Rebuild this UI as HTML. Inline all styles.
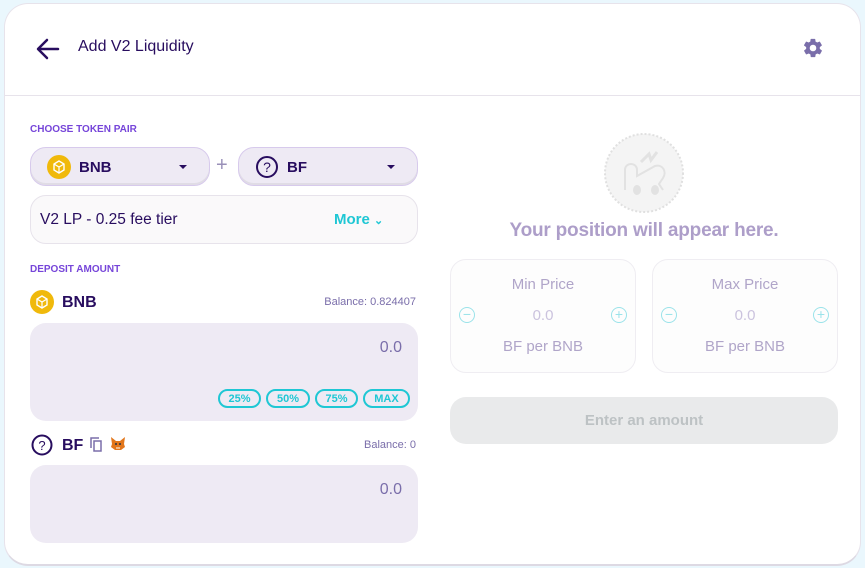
<!DOCTYPE html>
<html><head><meta charset="utf-8"><style>
*{box-sizing:border-box;margin:0;padding:0}
body{width:865px;height:568px;background:#eaf7fd;font-family:"Liberation Sans",sans-serif;position:relative;overflow:hidden;color:#280d5f}
.card{position:absolute;left:4px;top:3px;width:857px;height:563px;background:#fff;border:1px solid #e7e3eb;border-bottom:2px solid #ddd9e3;border-radius:24px;overflow:hidden}
.hdr{position:absolute;left:0;top:0;width:100%;height:92px;border-bottom:1px solid #e7e3eb}
.abs{position:absolute}
.lbl{font-size:10px;font-weight:bold;color:#7645d9}
.sel{position:absolute;top:143px;height:39px;background:#eeeaf4;border:1px solid #d7caec;border-radius:16px;box-shadow:inset 0 -2px 0 rgba(0,0,0,.06)}
.sel b{position:absolute;left:48px;top:11px;font-size:15px}
.caret{position:absolute;right:22px;top:17px;width:0;height:0;border-left:4px solid transparent;border-right:4px solid transparent;border-top:4px solid #280d5f}
.inp{position:absolute;left:25px;width:388px;background:#eeeaf4;border-radius:16px}
.pct{position:absolute;top:66px;height:19px;border:2px solid #1fc7d4;border-radius:10px;color:#1fc7d4;font-size:11px;font-weight:bold;text-align:center;line-height:16px}
.pbox{position:absolute;top:255px;width:186px;height:114px;border:1px solid #efedf2;border-radius:16px;background:#fdfdfd;text-align:center;color:#b0a5c9}
.circ{position:absolute;top:47px;width:16px;height:16px;border:1.5px solid #9be3ea;border-radius:50%;color:#9be3ea;font-size:14px;line-height:12px;text-align:center}
</style></head><body>
<div class="card">
 <div class="hdr">
  <svg class="abs" style="left:30px;top:33px" width="26" height="24" viewBox="0 0 26 24"><path d="M23 12H4M12 3L3 12l9 9" fill="none" stroke="#280d5f" stroke-width="2.5" stroke-linecap="round" stroke-linejoin="round"/></svg>
  <div class="abs" style="left:73px;top:34px;font-size:16px;color:#280d5f">Add V2 Liquidity</div>
  <svg class="abs" style="left:797px;top:33px" width="22" height="22" viewBox="0 0 24 24"><path fill="#7a6eaa" d="M19.4 13c.04-.3.06-.6.06-1s-.02-.7-.07-1l2.1-1.65c.2-.15.24-.42.12-.64l-2-3.460c-.12-.22-.38-.3-.6-.22l-2.5 1c-.52-.4-1.080-.72-1.7-.98l-.37-2.650A.5.5 0 0 0 13.9 2h-4a.5.5 0 0 0-.5.42l-.37 2.650c-.6.26-1.180.58-1.7.98l-2.480-1c-.23-.08-.48 0-.6.22l-2 3.460c-.13.22-.07.5.12.64L4.570 11c-.04.32-.07.66-.07 1s.02.68.07 1l-2.1 1.650c-.2.15-.25.42-.13.64l2 3.460c.12.22.38.3.6.22l2.5-1c.52.4 1.080.72 1.7.98l.37 2.650c.04.24.25.42.5.42h4c.25 0 .46-.18.5-.42l.37-2.650c.6-.26 1.180-.58 1.7-.98l2.480 1c.23.08.48 0 .6-.22l2-3.460c.12-.22.07-.5-.12-.64zM12 15.6a3.6 3.6 0 1 1 0-7.2 3.6 3.6 0 0 1 0 7.2z"/></svg>
 </div>
 <div class="abs lbl" style="left:25px;top:120px">CHOOSE TOKEN PAIR</div>
 <div class="sel" style="left:25px;width:180px">
  <svg class="abs" style="left:16px;top:7px" width="24" height="24" viewBox="0 0 24 24"><circle cx="12" cy="12" r="12" fill="#f0b90b"/><path d="M12 6l5 3v6l-5 3-5-3V9z" fill="none" stroke="#fff" stroke-width="1.4"/><path d="M7 9l5 3 5-3M12 12v6" fill="none" stroke="#fff" stroke-width="1.2"/></svg>
  <b>BNB</b><div class="caret"></div>
 </div>
 <div class="abs" style="left:211px;top:150px;font-size:20px;color:#9a90b8">+</div>
 <div class="sel" style="left:233px;width:180px">
  <svg class="abs" style="left:16px;top:7px" width="24" height="24" viewBox="0 0 24 24"><circle cx="12" cy="12" r="10" fill="none" stroke="#280d5f" stroke-width="2"/><text x="12" y="17" text-anchor="middle" font-size="14" font-family="Liberation Sans" fill="#280d5f">?</text></svg>
  <b>BF</b><div class="caret"></div>
 </div>
 <div class="abs" style="left:25px;top:191px;width:388px;height:49px;background:#faf9fa;border:1px solid #e7e3eb;border-radius:16px">
  <div class="abs" style="left:9px;top:15px;font-size:15.5px">V2 LP - 0.25 fee tier</div>
  <div class="abs" style="left:303px;top:15px;font-size:15px;font-weight:bold;color:#1fc7d4">More <span style="font-size:11px">&#8964;</span></div>
 </div>
 <div class="abs lbl" style="left:25px;top:260px">DEPOSIT AMOUNT</div>
 <svg class="abs" style="left:25px;top:286px" width="24" height="24" viewBox="0 0 24 24"><circle cx="12" cy="12" r="12" fill="#f0b90b"/><path d="M12 6l5 3v6l-5 3-5-3V9z" fill="none" stroke="#fff" stroke-width="1.4"/><path d="M7 9l5 3 5-3M12 12v6" fill="none" stroke="#fff" stroke-width="1.2"/></svg>
 <div class="abs" style="left:57px;top:290px;font-size:16px;font-weight:bold">BNB</div>
 <div class="abs" style="right:444px;top:292px;font-size:11px;color:#7a6eaa">Balance: 0.824407</div>
 <div class="inp" style="top:319px;height:98px">
  <div class="abs" style="right:16px;top:16px;font-size:16px;color:#7a6eaa">0.0</div>
  <div class="pct" style="left:188px;width:43px">25%</div>
  <div class="pct" style="left:236px;width:44px">50%</div>
  <div class="pct" style="left:285px;width:43px">75%</div>
  <div class="pct" style="left:333px;width:47px">MAX</div>
 </div>
 <svg class="abs" style="left:26px;top:430px" width="22" height="22" viewBox="0 0 22 22"><circle cx="11" cy="11" r="9.5" fill="none" stroke="#280d5f" stroke-width="2"/><text x="11" y="16" text-anchor="middle" font-size="13" font-family="Liberation Sans" fill="#280d5f">?</text></svg>
 <div class="abs" style="left:57px;top:433px;font-size:16px;font-weight:bold">BF</div>
 <svg class="abs" style="left:84px;top:432px" width="14" height="16" viewBox="0 0 14 16"><path d="M2 12V2h8" fill="none" stroke="#7a6eaa" stroke-width="1.5"/><rect x="5" y="5" width="7" height="10" fill="none" stroke="#7a6eaa" stroke-width="1.5"/></svg>
 <svg class="abs" style="left:105px;top:432px" width="16" height="15" viewBox="0 0 16 15"><path d="M1 1l5 4h4l5-4-1 7 1 3-4 3H5l-4-3 1-3z" fill="#e2761b"/><path d="M5 8h2M9 8h2" stroke="#233447" stroke-width="1.5"/><path d="M6 12h4" stroke="#f5d0b0" stroke-width="1.5"/></svg>
 <div class="abs" style="right:444px;top:435px;font-size:11px;color:#7a6eaa">Balance: 0</div>
 <div class="inp" style="top:461px;height:78px">
  <div class="abs" style="right:16px;top:16px;font-size:16px;color:#7a6eaa">0.0</div>
 </div>
 <svg class="abs" style="left:598px;top:128px" width="82" height="82" viewBox="0 0 82 82"><circle cx="41" cy="41" r="39" fill="#f4f4f4" stroke="#e0e0e0" stroke-width="2" stroke-dasharray="2 2"/><path d="M22 58V38c0-8 12-8 12 0v6l18-10c8-2 12 6 8 12l-4 6 4 6" fill="none" stroke="#e2e2e2" stroke-width="2"/><path d="M38 30l8-8 2 6 6-8" fill="none" stroke="#e2e2e2" stroke-width="3"/><ellipse cx="34" cy="58" rx="4" ry="5" fill="#e2e2e2"/><ellipse cx="52" cy="58" rx="4" ry="5" fill="#e2e2e2"/></svg>
 <div class="abs" style="left:445px;top:216px;width:388px;text-align:center;font-size:19px;font-weight:bold;color:#ad9ec9;letter-spacing:-0.2px">Your position will appear here.</div>
 <div class="pbox" style="left:445px">
  <div style="margin-top:16px;font-size:15px">Min Price</div>
  <div class="circ" style="left:8px">&minus;</div>
  <div style="margin-top:14px;font-size:15px;color:#cbc3de">0.0</div>
  <div class="circ" style="left:160px">+</div>
  <div style="margin-top:14px;font-size:15px">BF per BNB</div>
 </div>
 <div class="pbox" style="left:647px">
  <div style="margin-top:16px;font-size:15px">Max Price</div>
  <div class="circ" style="left:8px">&minus;</div>
  <div style="margin-top:14px;font-size:15px;color:#cbc3de">0.0</div>
  <div class="circ" style="left:160px">+</div>
  <div style="margin-top:14px;font-size:15px">BF per BNB</div>
 </div>
 <div class="abs" style="left:445px;top:393px;width:388px;height:47px;background:#e9eaeb;border-radius:16px;text-align:center;line-height:47px;font-size:15px;font-weight:bold;color:#bdc2c4">Enter an amount</div>
</div>
</body></html>
